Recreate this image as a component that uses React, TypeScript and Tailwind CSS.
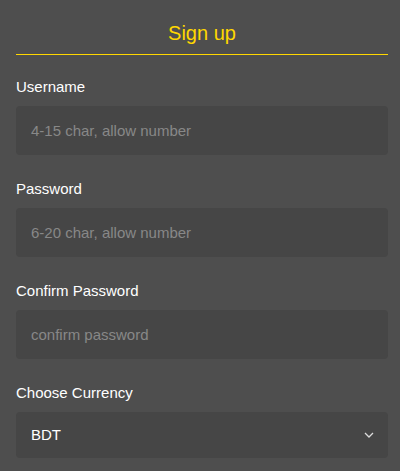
import React, { useState } from "react";

const fields = [
  { label: "Username", placeholder: "4-15 char, allow number", type: "text" },
  { label: "Password", placeholder: "6-20 char, allow number", type: "password" },
  { label: "Confirm Password", placeholder: "confirm password", type: "password" },
];

const Chevron = () => (
  <svg width="10" height="6" viewBox="0 0 10 6" fill="none" className="text-[#dcdcdc]">
    <path d="M1 1l4 4 4-4" stroke="currentColor" strokeWidth="1.3" />
  </svg>
);

export default function App() {
  const [currency, setCurrency] = useState("BDT");

  return (
    <div
      className="w-[400px] h-[471px] bg-[#4e4e4e] pl-4 pr-3 overflow-hidden"
      style={{ fontFamily: '"Liberation Sans", Arial, sans-serif' }}
    >
      {/* Header */}
      <div className="pt-[19px] pb-[7px] text-center">
        <h1 className="text-[20px] leading-[28px] text-[#ffd700] font-normal">Sign up</h1>
      </div>
      <div className="h-px bg-[#ffd700]" />

      <form className="flex flex-col gap-6 pt-[22px]">
        {fields.map((f) => (
          <div key={f.label} className="flex flex-col">
            <label className="text-[15px] leading-5 text-white mb-[9px]">{f.label}</label>
            <input
              type={f.type}
              placeholder={f.placeholder}
              className="h-[49px] w-full rounded bg-[#464646] px-[15px] text-[15px] text-white placeholder:text-[#888888] outline-none"
            />
          </div>
        ))}

        <div className="flex flex-col">
          <label className="text-[15px] leading-5 text-white mb-[9px]">Choose Currency</label>
          <div className="relative">
            <select
              value={currency}
              onChange={(e) => setCurrency(e.target.value)}
              className="h-[46px] w-full appearance-none rounded bg-[#464646] px-[15px] text-[15px] text-white outline-none"
            >
              <option value="BDT">BDT</option>
              <option value="INR">INR</option>
              <option value="USD">USD</option>
            </select>
            <span className="pointer-events-none absolute right-[14px] top-1/2 -translate-y-1/2 flex">
              <Chevron />
            </span>
          </div>
        </div>
      </form>
    </div>
  );
}
